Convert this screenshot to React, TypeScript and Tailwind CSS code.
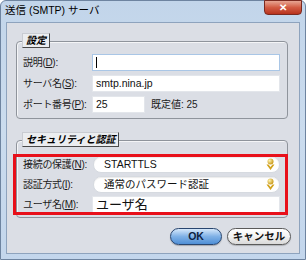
import React from "react";

const jp = { fontFamily: '"Liberation Sans", "Noto Sans CJK JP", sans-serif' };

function Mn({ c }: { c: string }) {
  return <span className="underline underline-offset-[1px]">{c}</span>;
}

function Label({ text, k }: { text: string; k: string }) {
  return (
    <div className="w-[75px] shrink-0 pl-[6px] text-[10px] tracking-[-0.3px] text-[#1b1b1b] whitespace-nowrap leading-none">
      {text}(<Mn c={k} />):
    </div>
  );
}

function Tag({ children }: { children: React.ReactNode }) {
  return (
    <div className="absolute -top-[9px] left-[5px] h-[15px] px-[3px] flex items-center bg-[#ebedf0] border border-[#c9ccd2] border-r-[#4a4a4a] border-b-[#4a4a4a] text-[10px] font-bold italic text-black leading-none">
      {children}
    </div>
  );
}

function Input({ value, focused, big }: { value?: string; focused?: boolean; big?: boolean }) {
  return (
    <div
      className={`h-[17px] flex-1 flex items-center bg-white border pl-[3px] ${
        focused ? "border-[#a9c6e6]" : "border-[#e3e6eb]"
      }`}
    >
      {focused && <div className="w-px h-[11px] bg-black" />}
      {value && (
        <span className={`${big ? "text-[13px]" : "text-[10.5px]"} text-[#111] leading-none`}>{value}</span>
      )}
    </div>
  );
}

function Chooser({ value }: { value: string }) {
  return (
    <div className="h-[17px] flex-1 flex items-center justify-between bg-white rounded-[8px] border border-[#d6dae0] shadow-[inset_0_1px_1px_rgba(0,0,0,0.08)] pl-[10px] pr-[4px]">
      <span className="text-[10.5px] text-[#111] leading-none">{value}</span>
      <svg width="9" height="13" viewBox="0 0 9 13">
        <defs>
          <radialGradient id="gb" cx="0.35" cy="0.35" r="0.7">
            <stop offset="0" stopColor="#fff3b0" />
            <stop offset="1" stopColor="#c69511" />
          </radialGradient>
        </defs>
        <circle cx="4.5" cy="3.5" r="3" fill="url(#gb)" />
        <path d="M0.5 6.5 L4.5 12 L8.5 6.5 L6.5 6.5 L4.5 9 L2.5 6.5 Z" fill="#d2a21c" />
      </svg>
    </div>
  );
}

export default function App() {
  return (
    <div
      className="w-[306px] h-[260px] flex flex-col rounded-t-[6px] border border-[#6e84a0] bg-gradient-to-b from-[#c2d5ea] via-[#cbdcee] to-[#c3d6ec]"
      style={jp}
    >
      {/* Title bar */}
      <div className="h-[21px] flex items-start justify-between pl-[4px]">
        <div className="pt-[4px] text-[10.5px] text-black leading-none whitespace-nowrap">送信 (SMTP) サーバ</div>
        <div className="mr-[3px] w-[38px] h-[15px] -mt-px rounded-b-[4px] border border-[#7a2a20] bg-gradient-to-b from-[#e6a593] via-[#d25b43] to-[#b8321c] flex items-center justify-center">
          <span className="text-white text-[10px] font-bold leading-none">✕</span>
        </div>
      </div>

      {/* Client area */}
      <div className="flex-1 mx-[5px] mb-[5px] bg-[#dbdee5] border border-[#8ea3bd] flex flex-col pl-[9px]">
        {/* 設定 */}
        <div className="relative mt-[18px] w-[272px] h-[78px] border border-[#8f949c] rounded-[4px] shadow-[inset_1px_1px_0_#f4f5f7] pt-[12px] flex flex-col gap-[4px]">
          <Tag>設定</Tag>
          <div className="flex items-center pr-[7px]">
            <Label text="説明" k="D" />
            <Input focused />
          </div>
          <div className="flex items-center pr-[7px]">
            <Label text="サーバ名" k="S" />
            <Input value="smtp.nina.jp" />
          </div>
          <div className="flex items-center">
            <Label text="ポート番号" k="P" />
            <div className="w-[53px] flex">
              <Input value="25" />
            </div>
            <span className="ml-[6px] text-[10px] text-[#1b1b1b] leading-none">既定値: 25</span>
          </div>
        </div>

        {/* セキュリティと認証 */}
        <div className="relative mt-[21px] w-[272px] h-[78px] border border-[#8f949c] rounded-[4px] shadow-[inset_1px_1px_0_#f4f5f7] pt-[15px] flex flex-col gap-[3px]">
          <Tag>セキュリティと認証</Tag>
          <div className="flex items-center pr-[7px]">
            <Label text="接続の保護" k="N" />
            <div className="flex-1 flex pl-px">
              <Chooser value="STARTTLS" />
            </div>
          </div>
          <div className="flex items-center pr-[7px]">
            <Label text="認証方式" k="I" />
            <div className="flex-1 flex pl-px">
              <Chooser value="通常のパスワード認証" />
            </div>
          </div>
          <div className="flex items-center pr-[7px]">
            <Label text="ユーザ名" k="M" />
            <Input value="ユーザ名" big />
          </div>
          <div className="absolute left-[-4px] top-[13px] w-[275px] h-[61px] border-[3px] border-[#e8101a] pointer-events-none" />
        </div>

        {/* Buttons */}
        <div className="mt-[10px] flex justify-end gap-[5px] pr-[8px]">
          <button className="w-[52px] h-[17px] rounded-full border border-[#28456f] bg-gradient-to-b from-[#d6e8fa] via-[#7fb1e6] to-[#4f8fd6] text-[10.5px] font-bold text-[#0d2140] leading-none shadow-[0_1px_1px_rgba(0,0,0,0.25)]">
            OK
          </button>
          <button className="w-[64px] h-[17px] rounded-full border border-[#5a5a5a] bg-gradient-to-b from-white via-[#f2f2f2] to-[#d9d9d9] text-[10.5px] font-bold text-[#111] leading-none shadow-[0_1px_1px_rgba(0,0,0,0.2)]">
            キャンセル
          </button>
        </div>
      </div>
    </div>
  );
}
